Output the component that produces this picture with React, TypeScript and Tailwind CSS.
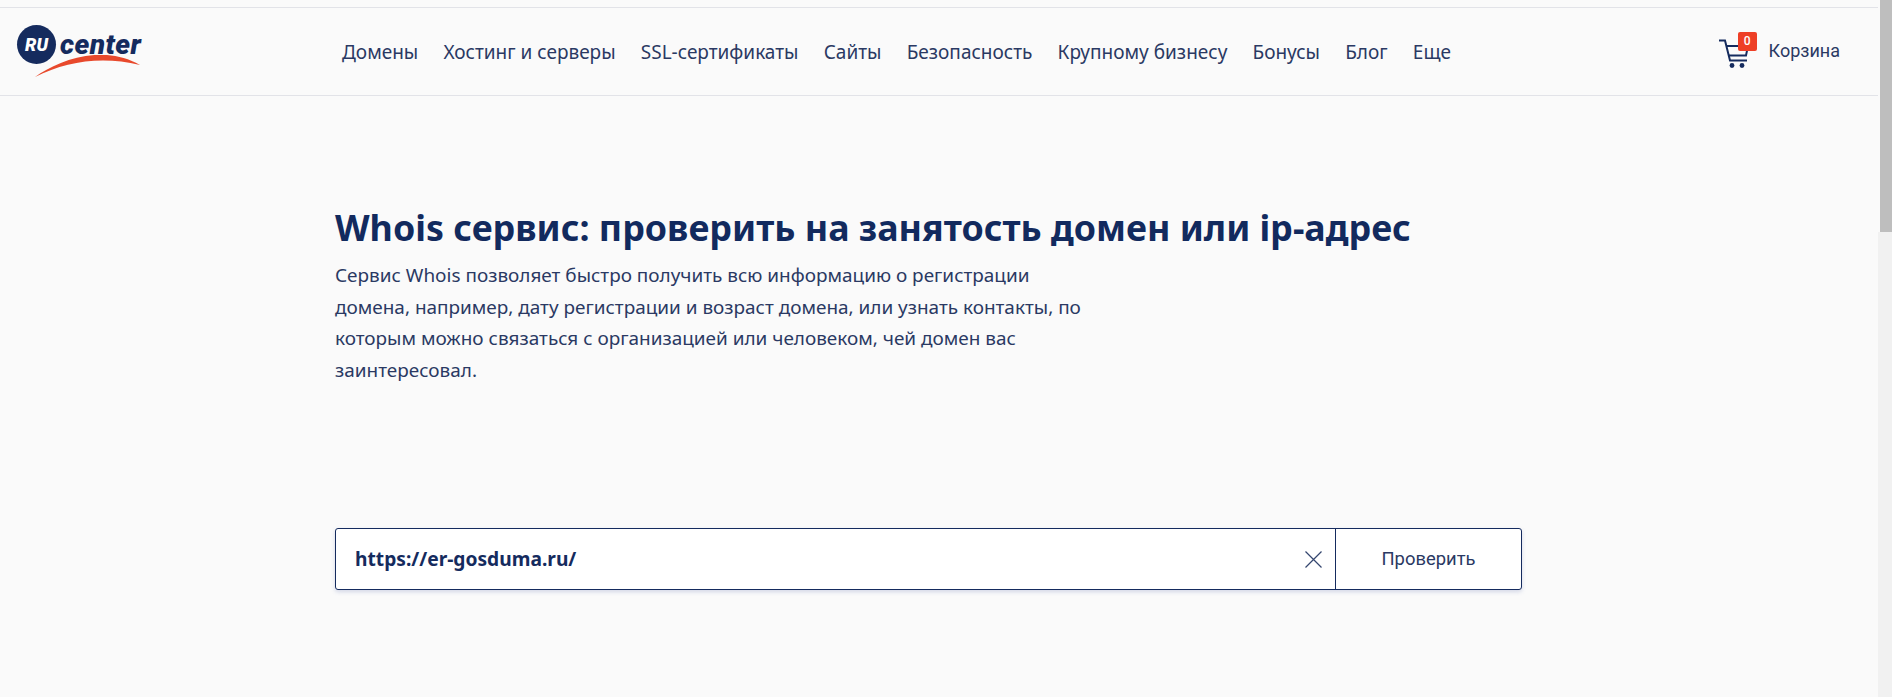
const navItems = [
  "Домены",
  "Хостинг и серверы",
  "SSL-сертификаты",
  "Сайты",
  "Безопасность",
  "Крупному бизнесу",
  "Бонусы",
  "Блог",
  "Еще",
];

function Logo() {
  return (
    <div className="relative h-[54px] w-[126px]">
      <div className="flex items-center">
        <div className="flex h-[39px] w-[39px] items-center justify-center rounded-full bg-[#152b5e] font-['Roboto',sans-serif] text-[18px] font-black text-white italic">
          RU
        </div>
        <span className="ml-[4px] font-['Roboto',sans-serif] text-[28px] leading-[39px] font-black tracking-[0.4px] text-[#152b5e] italic">
          center
        </span>
      </div>
      <svg className="absolute top-[30px] left-0" width="126" height="24" viewBox="0 0 126 24">
        <path d="M18 22C40 6 85 -12 123 10C85 1 50 6 18 22Z" fill="#e8492c" />
      </svg>
    </div>
  );
}

function Cart() {
  return (
    <div className="relative h-[34px] w-[38px]">
      <svg className="absolute top-[4px] left-0" width="30" height="30" viewBox="0 0 30 30" fill="none" stroke="#152b5e" strokeWidth="2">
        <path d="M0 1.500H6L11 21.500H28" />
        <path d="M7.500 7H29L27 16.500H9.500" />
        <circle cx="13" cy="26.500" r="2.400" fill="#152b5e" stroke="none" />
        <circle cx="23" cy="26.500" r="2.400" fill="#152b5e" stroke="none" />
      </svg>
      <span className="absolute top-[-3px] left-[19px] flex h-[19px] w-[19px] items-center justify-center rounded-[2px] bg-[#ee3f26] font-['Roboto',sans-serif] text-[12px] font-medium text-white">
        0
      </span>
    </div>
  );
}

export default function App() {
  return (
    <div className="flex h-[697px] w-[1892px] overflow-hidden bg-[#fafafa] text-[#152b5e]">
      <div className="flex min-w-0 flex-1 flex-col">
        <div className="mt-[7px] h-[1px] bg-[#e2e3e8]" />
        <header className="flex h-[88px] items-center border-b border-[#e2e3e8] pl-[17px]">
          <Logo />
          <nav className="mt-[2px] ml-[199px] flex gap-[25.200px] font-['Noto_Sans',sans-serif] text-[19px] text-[#2a3963]">
            {navItems.map((item) => (
              <span key={item}>{item}</span>
            ))}
          </nav>
          <div className="mr-[38px] ml-auto flex items-center gap-[12px]">
            <Cart />
            <span className="mb-[2px] font-['Roboto',sans-serif] text-[18px] text-[#2a3963]">Корзина</span>
          </div>
        </header>
        <main className="pl-[335px]">
          <h1 className="mt-[107px] font-['Noto_Sans',sans-serif] text-[35.800px] leading-[48px] font-bold text-[#122a5e]">
            Whois сервис: проверить на занятость домен или ip-адрес
          </h1>
          <p className="mt-[9px] w-[760px] font-['Noto_Sans',sans-serif] text-[18.950px] leading-[31.500px] text-[#2a3963]">
            Сервис Whois позволяет быстро получить всю информацию о регистрации
            домена, например, дату регистрации и возраст домена, или узнать контакты, по
            которым можно связаться с организацией или человеком, чей домен вас
            заинтересовал.
          </p>
          <div className="mt-[142px] flex h-[62px] w-[1187px] rounded-[3px] border border-[#152b5e] bg-white shadow-[0_2px_4px_rgba(60,80,160,0.2)]">
            <div className="flex min-w-0 flex-1 items-center pr-[13px] pl-[19px]">
              <span className="flex-1 font-['Noto_Sans',sans-serif] text-[19.200px] font-bold">
                https://er-gosduma.ru/
              </span>
              <svg width="17" height="17" viewBox="0 0 17 17" stroke="#34466f" strokeWidth="1.2">
                <path d="M0.500 0.500L16.500 16.500M16.500 0.500L0.500 16.500" />
              </svg>
            </div>
            <button className="w-[186px] border-l border-[#152b5e] font-['Roboto',sans-serif] text-[18.400px] text-[#2a3963]">
              Проверить
            </button>
          </div>
        </main>
      </div>
      <div className="flex w-[14px] flex-col">
        <div className="ml-[2px] h-[232px] bg-[#bebebe]" />
        <div className="flex-1 bg-[#f1f1f1]" />
      </div>
    </div>
  );
}
